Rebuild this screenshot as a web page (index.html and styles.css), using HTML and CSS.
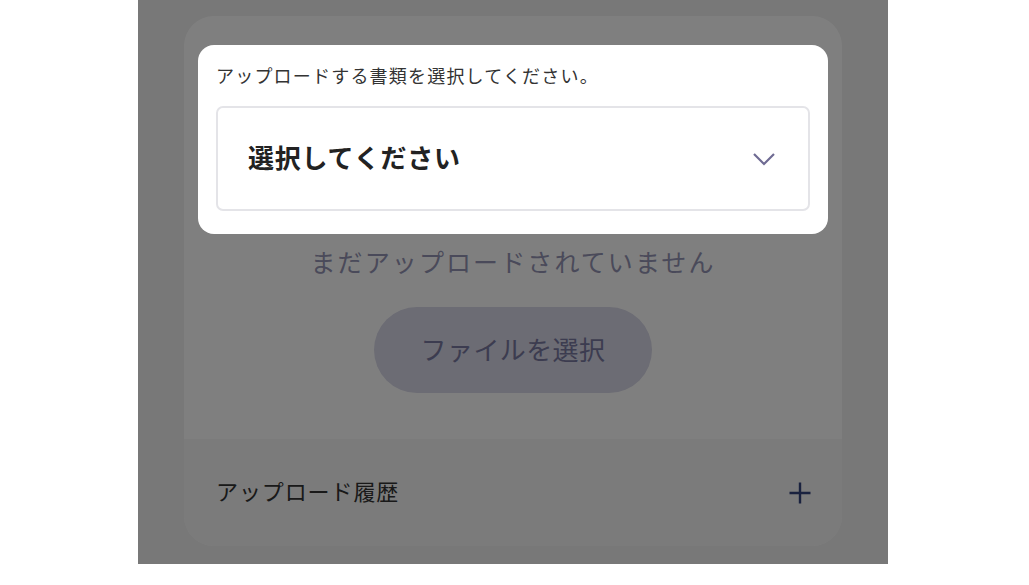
FILE: index.html
```html
<!DOCTYPE html>
<html lang="ja">
<head>
    <meta charset="UTF-8">
    <meta name="viewport" content="width=device-width, initial-scale=1.0">
    <title>書類アップロード</title>
    <link rel="stylesheet" href="styles.css">
</head>
<body>
    <div class="screen">
        <div class="card">
            <div class="upload-section">
                <p class="empty-text">まだアップロードされていません</p>
                <button class="file-btn">ファイルを選択</button>
            </div>
            <div class="history-section">
                <span class="history-title">アップロード履歴</span>
                <svg class="plus-icon" width="24" height="24" viewBox="0 0 24 24">
                    <path d="M12 1.5v21M1.5 12h21" stroke="currentColor" stroke-width="2.4" fill="none"/>
                </svg>
            </div>
        </div>

        <!-- 書類選択ダイアログ -->
        <div class="overlay"></div>
        <div class="doc-dialog">
            <p class="dialog-label">アップロードする書類を選択してください。</p>
            <div class="select-box">
                <span class="select-text">選択してください</span>
                <svg class="chevron" width="24" height="16" viewBox="0 0 24 16">
                    <path d="M2 3l10 10 10-10" stroke="currentColor" stroke-width="2.2" fill="none"/>
                </svg>
            </div>
        </div>
    </div>
</body>
</html>
```

FILE: styles.css
```css
body {
    margin: 0;
    padding: 0;
    background-color: #ffffff;
    font-family: "Noto Sans CJK JP", "Noto Sans", sans-serif;
}
.screen {
    position: relative;
    width: 750px;
    height: 564px;
    margin-left: 138px;
    padding-top: 16px;
    box-sizing: border-box;
    background-color: #f0f0f0;
    overflow: hidden;
}
.card {
    margin: 0 46px;
    background-color: #ffffff;
    border-radius: 30px;
    overflow: hidden;
}
.upload-section {
    display: flex;
    flex-direction: column;
    align-items: center;
    padding: 227px 0 46px;
}
.empty-text {
    margin: 0;
    font-size: 25px;
    line-height: 36px;
    letter-spacing: 2.1px;
    color: #9494b4;
}
.file-btn {
    margin-top: 28px;
    width: 278px;
    height: 86px;
    padding: 0 0 4px;
    border: none;
    border-radius: 43px;
    background-color: #d8d8e8;
    color: #7878a0;
    font-family: inherit;
    font-size: 26px;
    letter-spacing: 0.4px;
}
.history-section {
    display: flex;
    align-items: center;
    justify-content: space-between;
    height: 107px;
    padding: 0 30px 0 32px;
    background-color: #f6f6f6;
}
.history-title {
    padding-bottom: 5px;
    font-size: 22px;
    color: #333333;
    letter-spacing: 0.9px;
}
.plus-icon {
    color: #34447e;
}
.overlay {
    position: absolute;
    top: 0;
    left: 0;
    right: 0;
    bottom: 0;
    background: rgba(0, 0, 0, 0.5);
}
.doc-dialog {
    position: absolute;
    top: 45px;
    left: 60px;
    width: 630px;
    padding: 17px 18px 23px;
    box-sizing: border-box;
    background-color: #ffffff;
    border-radius: 16px;
}
.dialog-label {
    margin: 0 0 18px;
    font-size: 18px;
    line-height: 26px;
    letter-spacing: 1.2px;
    color: #333333;
}
.select-box {
    display: flex;
    align-items: center;
    justify-content: space-between;
    height: 105px;
    padding: 0 32px 0 30px;
    box-sizing: border-box;
    border: 2px solid #e4e4e8;
    border-radius: 7px;
}
.select-text {
    padding-bottom: 4px;
    font-size: 26px;
    font-weight: bold;
    color: #222222;
    letter-spacing: 0.8px;
}
.chevron {
    color: #6f6b93;
}
```
